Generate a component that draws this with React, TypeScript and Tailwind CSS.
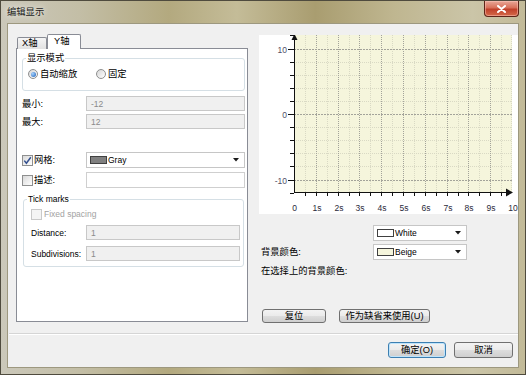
import React from "react";

function Check({ checked, disabled }: { checked?: boolean; disabled?: boolean }) {
  return (
    <div
      className={`w-[11px] h-[11px] border shrink-0 flex items-center justify-center ${
        disabled
          ? "border-[#c9c9c9] bg-[#f4f4f4]"
          : "border-[#8e8f8f] bg-[linear-gradient(135deg,#d9d9d9,#ffffff)]"
      }`}
    >
      {checked && (
        <svg width="9" height="9" viewBox="0 0 9 9">
          <path d="M1.3 4.6 L3.4 7.2 L7.8 1.2" fill="none" stroke="#34508f" strokeWidth="1.5" />
        </svg>
      )}
    </div>
  );
}

function Radio({ checked }: { checked?: boolean }) {
  return (
    <div className="w-[10px] h-[10px] rounded-full border border-[#8e8f8f] bg-[linear-gradient(135deg,#d6d6d6,#ffffff)] shrink-0 flex items-center justify-center">
      {checked && (
        <div className="w-[5px] h-[5px] rounded-full bg-[radial-gradient(circle_at_35%_35%,#a6d4ff,#1b5cb5)]" />
      )}
    </div>
  );
}

function Arrow() {
  return (
    <svg width="6" height="4" viewBox="0 0 6 4" className="shrink-0">
      <path d="M0 0 H6 L3 3.5 Z" fill="#1a1a1a" />
    </svg>
  );
}

function Combo({ swatch, label, className }: { swatch: string; label: string; className: string }) {
  return (
    <div className={`h-[16px] border border-[#c6c6c6] bg-white flex items-center pl-[3px] pr-[5px] ${className}`}>
      <div className={`w-[17px] h-[8px] border border-[#404040] shrink-0 ${swatch}`} />
      <span className="ml-[1px] flex-1 leading-[12px]">{label}</span>
      <Arrow />
    </div>
  );
}

function Field({ value, disabled, className }: { value?: string; disabled?: boolean; className: string }) {
  return (
    <div
      className={`border flex items-center pl-[4px] leading-[12px] ${
        disabled ? "bg-[#f0f0f0] border-[#c8c8c8] text-[#8a8a8a]" : "bg-white border-[#cfcfcf]"
      } ${className}`}
    >
      {value}
    </div>
  );
}

function Btn({ children, className }: { children: React.ReactNode; className: string }) {
  return (
    <div
      className={`flex items-center justify-center rounded-[3px] text-[9.3px] leading-[12px] bg-[linear-gradient(#f3f3f3_0%,#ebebeb_48%,#dddddd_52%,#cfcfcf_100%)] ${className}`}
    >
      {children}
    </div>
  );
}

function Chart() {
  const X0 = 35;
  const X1 = 253;
  const Y1 = 157;
  const px = (s: number) => Math.round(X0 + (s * (X1 - X0)) / 10) + 0.5;
  const py = (v: number) => Math.round(79 - v * 6.55) + 0.5;
  const halfSec = [0.5, 1.5, 2.5, 3.5, 4.5, 5.5, 6.5, 7.5, 8.5, 9.5];
  const secs = [1, 2, 3, 4, 5, 6, 7, 8, 9];
  const minorV = [8, 6, 4, 2, -2, -4, -6, -8];
  const majorV = [10, 0, -10];
  const xTicks = [0.5, 1, 1.5, 2, 2.5, 3, 3.5, 4, 4.5, 5, 5.5, 6, 6.5, 7, 7.5, 8, 8.5, 9, 9.5];
  const xLabels = ["0", "1s", "2s", "3s", "4s", "5s", "6s", "7s", "8s", "9s", "10"];
  return (
    <svg width="259" height="179" viewBox="0 0 259 179" className="block bg-white shrink-0">
      <rect x={X0} y={0} width={X1 - X0} height={Y1} fill="#f5f5dc" />
      {halfSec.map((s) => (
        <line key={"h" + s} x1={px(s)} x2={px(s)} y1={0} y2={Y1} stroke="#d9d9c4" strokeDasharray="1 1" />
      ))}
      {minorV.map((v) => (
        <line key={"mv" + v} x1={X0} x2={X1} y1={py(v)} y2={py(v)} stroke="#d9d9c4" strokeDasharray="1 1" />
      ))}
      <line x1={px(10) - 1} x2={px(10) - 1} y1={0} y2={Y1} stroke="#d9d9c4" strokeDasharray="1 1" />
      {secs.map((s) => (
        <line key={"s" + s} x1={px(s)} x2={px(s)} y1={0} y2={Y1} stroke="#a3a39a" strokeDasharray="1 1" />
      ))}
      {majorV.map((v) => (
        <line key={"Mv" + v} x1={X0} x2={X1} y1={py(v)} y2={py(v)} stroke="#a3a39a" strokeDasharray="2 1" />
      ))}
      {/* y axis */}
      <line x1={X0 + 0.5} x2={X0 + 0.5} y1={0} y2={Y1 + 0.5} stroke="#111" />
      <path d={`M${X0 - 2.5} 5 L${X0 + 3.5} 5 L${X0 + 0.5} -1 Z`} fill="#111" />
      {minorV.concat([12, -12]).map((v) => (
        <line key={"yt" + v} x1={X0 - 4} x2={X0} y1={py(v)} y2={py(v)} stroke="#111" />
      ))}
      {majorV.map((v) => (
        <line key={"yM" + v} x1={X0 - 6} x2={X0} y1={py(v)} y2={py(v)} stroke="#111" />
      ))}
      {/* x axis */}
      <line x1={X0} x2={X1} y1={Y1 + 0.5} y2={Y1 + 0.5} stroke="#111" />
      <path d={`M${X1 - 6} ${Y1 - 3.5} L${X1 - 6} ${Y1 + 4.5} L${X1 + 1} ${Y1 + 0.5} Z`} fill="#111" />
      {xTicks.map((s) => (
        <line key={"xt" + s} x1={px(s)} x2={px(s)} y1={Y1} y2={Y1 + 4} stroke="#111" />
      ))}
      {/* labels */}
      {majorV.map((v) => (
        <text
          key={"yl" + v}
          x={28}
          y={py(v) + 3}
          textAnchor="end"
          fontSize="8.5"
          fontFamily="Liberation Sans, sans-serif"
          fill="#505068"
        >
          {v}
        </text>
      ))}
      {xLabels.map((l, i) => (
        <text
          key={"xl" + i}
          x={px(i) + (i === 0 ? 0 : 0.5)}
          y={176}
          textAnchor="middle"
          fontSize="8.5"
          fontFamily="Liberation Sans, sans-serif"
          fill="#2a2a3a"
        >
          {l}
        </text>
      ))}
    </svg>
  );
}

export default function App() {
  return (
    <div className="w-[526px] h-[375px] flex flex-col overflow-hidden border border-[#4f4b3e] text-[8.5px] text-black font-['Liberation_Sans','Noto_Sans_CJK_SC',sans-serif] bg-[linear-gradient(90deg,#cbc8ba_0%,#c3bea6_15%,#b3a97f_32%,#c4bc98_45%,#a99d70_60%,#bfb690_75%,#cbc5a8_90%,#c2ba98_100%)]">
      {/* title bar */}
      <div className="h-[22px] flex items-start shrink-0">
        <div className="pl-[6px] pt-[4px] text-[9.3px] leading-[14px] text-[#1c1c1c] [text-shadow:0_0_6px_#ffffff]">
          编辑显示
        </div>
        <div className="flex-1" />
        <div className="mr-[6px] w-[35px] h-[16px] rounded-b-[4px] border border-t-0 border-[#5d2418] bg-[linear-gradient(#e8a898_0%,#d8705a_45%,#c0402a_55%,#d46a4a_100%)] flex items-center justify-center shadow-[inset_0_0_0_1px_rgba(255,200,190,0.5)]">
          <svg width="9" height="8" viewBox="0 0 9 8">
            <path d="M1 1 L8 7 M8 1 L1 7" stroke="#ffffff" strokeWidth="2" strokeLinecap="round" />
          </svg>
        </div>
      </div>
      {/* client */}
      <div className="flex-1 mx-[6px] mb-[6px] border border-[#9d987f] bg-[#f0f0f0] flex flex-col overflow-hidden">
        {/* top section */}
        <div className="h-[309px] shrink-0 flex pl-[8px] pt-[11px]">
          {/* left: tabs */}
          <div className="w-[232px] shrink-0 flex flex-col">
            <div className="h-[14px] flex items-end relative z-10 -mb-[1px]">
              <div className="ml-[1px] w-[30px] h-[12px] border border-b-0 border-[#898c95] bg-[linear-gradient(#f5f5f5,#e2e2e2)] flex items-center pl-[4px] text-[9.3px] leading-[11px] rounded-t-[2px]">
                X轴
              </div>
              <div className="w-[34px] h-[15px] border border-b-0 border-[#898c95] bg-white flex items-start pt-[1px] pl-[6px] text-[9.3px] leading-[11px] rounded-t-[2px]">
                Y轴
              </div>
            </div>
            <div className="h-[274px] border border-[#898c95] bg-white flex flex-col">
              <fieldset className="mt-[3px] ml-[5px] mr-[2px] border border-[#d5dfe5] rounded-[3px] pb-[10px]">
                <legend className="ml-[3px] px-[1px] text-[9.3px] leading-[12px]">显示模式</legend>
                <div className="mt-[4px] h-[12px] flex items-center pl-[5px] text-[9.3px]">
                  <div className="w-[68px] flex items-center">
                    <Radio checked />
                    <span className="ml-[2px] leading-[12px]">自动缩放</span>
                  </div>
                  <Radio />
                  <span className="ml-[2px] leading-[12px]">固定</span>
                </div>
              </fieldset>
              <div className="mt-[5px] ml-[5px] mr-[2px] h-[15px] flex items-center">
                <span className="w-[64px] text-[9.3px] leading-[12px]">最小:</span>
                <Field value="-12" disabled className="flex-1 h-[15px]" />
              </div>
              <div className="mt-[3px] ml-[5px] mr-[2px] h-[15px] flex items-center">
                <span className="w-[64px] text-[9.3px] leading-[12px]">最大:</span>
                <Field value="12" disabled className="flex-1 h-[15px]" />
              </div>
              <div className="mt-[23px] ml-[5px] mr-[2px] h-[16px] flex items-center">
                <div className="w-[64px] flex items-center">
                  <Check checked />
                  <span className="ml-[1px] text-[9.3px] leading-[12px]">网格:</span>
                </div>
                <Combo swatch="bg-[#808080]" label="Gray" className="flex-1" />
              </div>
              <div className="mt-[4px] ml-[5px] mr-[2px] h-[16px] flex items-center">
                <div className="w-[64px] flex items-center">
                  <Check />
                  <span className="ml-[1px] text-[9.3px] leading-[12px]">描述:</span>
                </div>
                <Field className="flex-1 h-[16px]" />
              </div>
              <fieldset className="mt-[5px] ml-[6px] mr-[3px] border border-[#d5dfe5] rounded-[3px] pb-[5px]">
                <legend className="ml-[3px] px-[1px] leading-[12px]">Tick marks</legend>
                <div className="mt-[3px] h-[12px] flex items-center pl-[7px]">
                  <Check disabled />
                  <span className="ml-[2px] text-[#a2a2a2] leading-[12px]">Fixed spacing</span>
                </div>
                <div className="mt-[5px] h-[15px] flex items-center pl-[7px] pr-[3px]">
                  <span className="w-[55px] leading-[12px]">Distance:</span>
                  <Field value="1" disabled className="flex-1 h-[15px]" />
                </div>
                <div className="mt-[6px] h-[15px] flex items-center pl-[7px] pr-[3px]">
                  <span className="w-[55px] leading-[12px]">Subdivisions:</span>
                  <Field value="1" disabled className="flex-1 h-[15px]" />
                </div>
              </fieldset>
            </div>
          </div>
          {/* right: chart and settings */}
          <div className="ml-[11px] w-[259px] shrink-0 flex flex-col">
            <Chart />
            <div className="mt-[11px] h-[16px] flex items-center pl-[114px]">
              <Combo swatch="bg-white" label="White" className="w-[94px]" />
            </div>
            <div className="mt-[3px] h-[16px] flex items-center pl-[2px]">
              <span className="w-[112px] text-[9.3px] leading-[12px]">背景颜色:</span>
              <Combo swatch="bg-[#f5f5dc]" label="Beige" className="w-[94px]" />
            </div>
            <div className="mt-[5px] h-[12px] pl-[2px] text-[9.3px] leading-[12px]">在选择上的背景颜色:</div>
            <div className="mt-[32px] h-[14px] flex items-center">
              <Btn className="ml-[3px] w-[64px] h-[14px] border border-[#707070]">复位</Btn>
              <Btn className="ml-[13px] w-[91px] h-[14px] border border-[#707070]">作为缺省来使用(U)</Btn>
            </div>
          </div>
        </div>
        {/* separator */}
        <div className="ml-[1px] border-t border-[#d5d5d5] border-b border-b-white" />
        {/* bottom buttons */}
        <div className="flex justify-end pt-[7px] pr-[5px]">
          <Btn className="w-[58px] h-[16px] border border-[#3c7fb1] shadow-[inset_0_0_0_1px_#bfe4fb]">确定(O)</Btn>
          <Btn className="ml-[8px] w-[59px] h-[16px] border border-[#707070]">取消</Btn>
        </div>
      </div>
    </div>
  );
}
